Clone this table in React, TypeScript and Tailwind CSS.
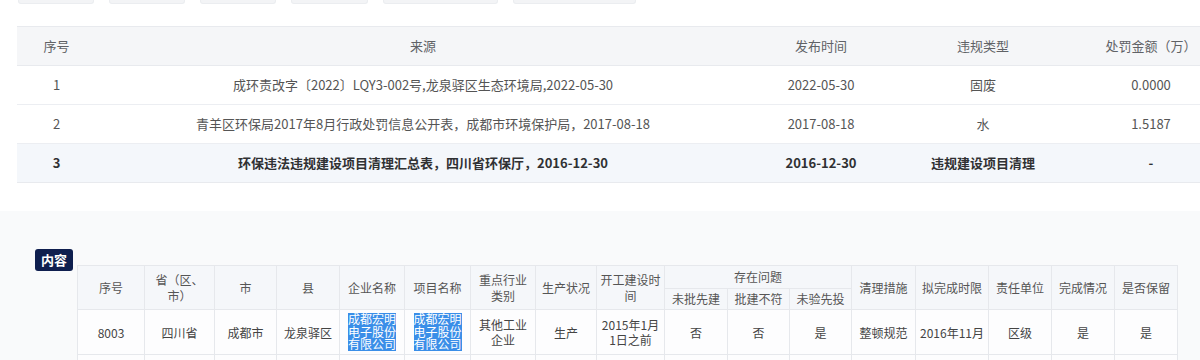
import React from 'react'

const TABS = [76, 76, 76, 77, 115, 123]

const PENALTIES = [
  {
    no: '1',
    source: '成环责改字〔2022〕LQY3-002号,龙泉驿区生态环境局,2022-05-30',
    date: '2022-05-30',
    type: '固废',
    amount: '0.0000',
  },
  {
    no: '2',
    source: '青羊区环保局2017年8月行政处罚信息公开表，成都市环境保护局，2017-08-18',
    date: '2017-08-18',
    type: '水',
    amount: '1.5187',
  },
  {
    no: '3',
    source: '环保违法违规建设项目清理汇总表，四川省环保厅，2016-12-30',
    date: '2016-12-30',
    type: '违规建设项目清理',
    amount: '-',
    active: true,
  },
]

const COL_WIDTHS = [
  'w-[67px]', 'w-[70px]', 'w-[62px]', 'w-[63px]', 'w-[65px]', 'w-[66px]',
  'w-[65px]', 'w-[61px]', 'w-[68px]', 'w-[63px]', 'w-[62px]', 'w-[62px]',
  'w-[64px]', 'w-[73px]', 'w-[63px]', 'w-[63px]', 'w-[63px]',
]

const th = 'border border-[#e6e8ec] px-[3px] font-normal text-[#555] leading-[16px]'
const td = 'border border-[#e6e8ec] px-[3px] text-[#444] leading-[15px]'

function Picked({ text }: { text: string }) {
  return (
    <div className="mx-auto w-[48px] bg-[#3a8ee8] text-[12px] leading-[12.5px] text-white">
      {text}
    </div>
  )
}

export default function App() {
  return (
    <div className="h-[360px] w-[1200px] overflow-hidden bg-white font-['Noto_Sans_CJK_SC','Noto_Sans',sans-serif]">
      {/* tab strip, scrolled mostly out of view */}
      <div className="flex gap-[15px] pl-[18px]">
        {TABS.map((w, i) => (
          <div
            key={i}
            style={{ width: w }}
            className="h-[4px] rounded-b-[3px] border-x border-b border-[#ebedf0] bg-[#f3f4f6]"
          />
        ))}
      </div>

      {/* penalty records */}
      <div className="ml-[17px] mt-[22px] overflow-hidden">
        <table className="w-[1211px] table-fixed border-collapse text-[13px]">
          <colgroup>
            <col className="w-[79px]" />
            <col className="w-[654px]" />
            <col className="w-[142px]" />
            <col className="w-[182px]" />
            <col className="w-[154px]" />
          </colgroup>
          <thead>
            <tr className="h-[39px] border-y border-[#e8eaee] bg-[#f5f6f8] text-[#606266]">
              <th className="font-normal">序号</th>
              <th className="font-normal">来源</th>
              <th className="font-normal">发布时间</th>
              <th className="font-normal">违规类型</th>
              <th className="font-normal">处罚金额（万）</th>
            </tr>
          </thead>
          <tbody>
            {PENALTIES.map((r) => (
              <tr
                key={r.no}
                className={
                  r.active
                    ? 'h-[39px] border-b border-[#e8eaee] bg-[#f4f7fb] font-bold text-[#303133]'
                    : 'h-[39px] border-b border-[#eceef2] text-[#555]'
                }
              >
                <td className="text-center">{r.no}</td>
                <td className="text-center">{r.source}</td>
                <td className="text-center">{r.date}</td>
                <td className="text-center">{r.type}</td>
                <td className="text-center">{r.amount}</td>
              </tr>
            ))}
          </tbody>
        </table>
      </div>

      {/* detail content */}
      <section className="mt-[28px] h-[200px] bg-[#f9fafb] pl-[35px] pt-[38px]">
        <div className="flex items-start gap-[4px]">
          <span className="flex h-[22px] w-[38px] shrink-0 items-center justify-center rounded-[3px] bg-[#0f1f4f] text-[13px] font-bold text-white">
            内容
          </span>
          <table className="mt-[16px] w-[1100px] table-fixed border-collapse text-center text-[12px]">
            <colgroup>
              {COL_WIDTHS.map((w, i) => (
                <col key={i} className={w} />
              ))}
            </colgroup>
            <thead className="bg-[#f5f7fa]">
              <tr className="h-[23px]">
                <th rowSpan={2} className={th}>序号</th>
                <th rowSpan={2} className={th}>省（区、市）</th>
                <th rowSpan={2} className={th}>市</th>
                <th rowSpan={2} className={th}>县</th>
                <th rowSpan={2} className={th}>企业名称</th>
                <th rowSpan={2} className={th}>项目名称</th>
                <th rowSpan={2} className={th}>重点行业类别</th>
                <th rowSpan={2} className={th}>生产状况</th>
                <th rowSpan={2} className={th}>开工建设时间</th>
                <th colSpan={3} className={th}>存在问题</th>
                <th rowSpan={2} className={th}>清理措施</th>
                <th rowSpan={2} className={th}>拟完成时限</th>
                <th rowSpan={2} className={th}>责任单位</th>
                <th rowSpan={2} className={th}>完成情况</th>
                <th rowSpan={2} className={th}>是否保留</th>
              </tr>
              <tr className="h-[21px]">
                <th className={th}>未批先建</th>
                <th className={th}>批建不符</th>
                <th className={th}>未验先投</th>
              </tr>
            </thead>
            <tbody className="bg-[#fdfdfe]">
              <tr className="h-[45px]">
                <td className={td}>8003</td>
                <td className={td}>四川省</td>
                <td className={td}>成都市</td>
                <td className={td}>龙泉驿区</td>
                <td className={td}><Picked text="成都宏明电子股份有限公司" /></td>
                <td className={td}><Picked text="成都宏明电子股份有限公司" /></td>
                <td className={td}>其他工业企业</td>
                <td className={td}>生产</td>
                <td className={td}>2015年1月1日之前</td>
                <td className={td}>否</td>
                <td className={td}>否</td>
                <td className={td}>是</td>
                <td className={td}>整顿规范</td>
                <td className={td}>2016年11月</td>
                <td className={td}>区级</td>
                <td className={td}>是</td>
                <td className={td}>是</td>
              </tr>
              {/* next record, only its top edge is in view */}
              <tr className="h-[45px]">
                <td className={td} />
                <td className={td} />
                <td className={td} />
                <td className={td} />
                <td className={`${td} align-top pt-[4px] leading-[12.5px]`}>成都宏明电子股份有限公司</td>
                <td className={`${td} align-top pt-[4px] leading-[12.5px]`}>成都宏明电子股份有限公司</td>
                <td className={td} />
                <td className={td} />
                <td className={td} />
                <td className={td} />
                <td className={td} />
                <td className={td} />
                <td className={td} />
                <td className={td} />
                <td className={td} />
                <td className={td} />
                <td className={td} />
              </tr>
            </tbody>
          </table>
        </div>
      </section>
    </div>
  )
}
